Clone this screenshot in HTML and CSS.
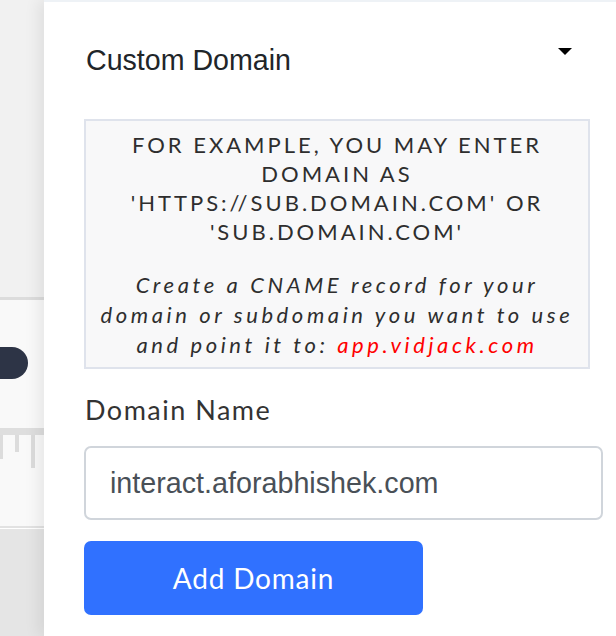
FILE: index.html
```html
<!DOCTYPE html>
<html>
<head>
    <title>Custom Domain</title>
    <link rel="stylesheet" href="styles.css">
</head>
<body>
    <div class="page">
        <div class="side">
            <div class="side-top"></div>
            <div class="side-mid">
                <div class="pill"></div>
                <div class="ruler">
                    <span class="tick t1"></span>
                    <span class="tick t2"></span>
                    <span class="tick t3"></span>
                </div>
            </div>
            <div class="side-bottom"></div>
        </div>
        <div class="panel">
            <div class="head">
                <h2>Custom Domain</h2>
                <span class="caret"></span>
            </div>
            <div class="info">
                <p class="info-upper">For example, you may enter domain as 'https://sub.domain.com' or 'sub.domain.com'</p>
                <p class="info-note">Create a CNAME record for your domain or subdomain you want to use and point it to: <span class="link">app.vidjack.com</span></p>
            </div>
            <label class="label" for="domain">Domain Name</label>
            <input id="domain" class="input" type="text" value="interact.aforabhishek.com">
            <button class="btn">Add Domain</button>
        </div>
    </div>
</body>
</html>
```

FILE: styles.css
```css
*{
    margin: 0;
    padding: 0;
    box-sizing: border-box;
}
html,body{
    height: 100%;
    background: #fff;
}
.page{
    display: flex;
    height: 636px;
    overflow: hidden;
}
.side{
    width: 44px;
    flex-shrink: 0;
    display: flex;
    flex-direction: column;
}
.side-top{
    height: 300px;
    background: #f1f1f1;
    border-bottom: 3px solid #dcdcdc;
}
.side-mid{
    height: 228px;
    background: #f9f9f9;
    border-bottom: 2px solid #e2e2e2;
    padding-top: 47px;
}
.pill{
    width: 28px;
    height: 32px;
    background: #2d3446;
    border-radius: 0 16px 16px 0;
}
.ruler{
    margin-top: 49px;
    height: 7px;
    background: #dedede;
    display: flex;
    align-items: flex-start;
}
.tick{
    width: 3px;
    margin-top: 7px;
    background: #dcdcdc;
}
.t1{ height: 24px; }
.t2{ height: 17px; margin-left: 12px; width: 4px; }
.t3{ height: 33px; margin-left: 12px; width: 4px; }
.side-bottom{
    flex: 1;
    margin-top: 1px;
    background: #e5e5e5;
}
.panel{
    flex: 1;
    background: #fff;
    border-top: 2px solid #eef2f6;
    padding-left: 40px;
    box-shadow: -6px 0 14px rgba(0,0,0,.07);
    position: relative;
    font-family: Lato, "Noto Sans", sans-serif;
    color: #333;
}
.head{
    width: 488px;
    display: flex;
    justify-content: space-between;
    align-items: flex-start;
    padding-top: 42px;
}
.head h2{
    font-family: "Liberation Sans", Arial, sans-serif;
    font-weight: normal;
    font-size: 28.6px;
    line-height: 32px;
    color: #212529;
    margin-left: 2px;
}
.caret{
    width: 0;
    height: 0;
    margin-top: 4px;
    border-top: 7px solid #000;
    border-left: 7px solid transparent;
    border-right: 7px solid transparent;
}
.info{
    width: 506px;
    margin-top: 43px;
    border: 2px solid #dfe3ec;
    background: #f8f8f9;
    padding: 9px 6px 7px;
    text-align: center;
    color: #2e2e2e;
    font-size: 22px;
}
.info-upper{
    text-transform: uppercase;
    line-height: 29px;
    letter-spacing: 3px;
}
.info-note{
    font-style: italic;
    line-height: 30px;
    letter-spacing: 3.6px;
    margin-top: 24px;
}
.link{
    color: #ff0000;
}
.label{
    display: block;
    margin-top: 24px;
    margin-left: 1px;
    font-size: 27px;
    line-height: 34px;
    letter-spacing: 1.5px;
    color: #333;
}
.input{
    display: block;
    width: 519px;
    height: 74px;
    margin-top: 19px;
    border: 2px solid #d0d5db;
    border-radius: 7px;
    padding: 0 24px;
    font-family: "Liberation Sans", Arial, sans-serif;
    font-size: 28.7px;
    color: #495057;
    background: #fff;
    outline: none;
}
.btn{
    display: block;
    width: 339px;
    height: 74px;
    margin-top: 21px;
    border: none;
    border-radius: 7px;
    background: #3071ff;
    color: #fff;
    font-family: Lato, "Noto Sans", sans-serif;
    font-size: 28px;
    letter-spacing: .8px;
    cursor: pointer;
}
```
